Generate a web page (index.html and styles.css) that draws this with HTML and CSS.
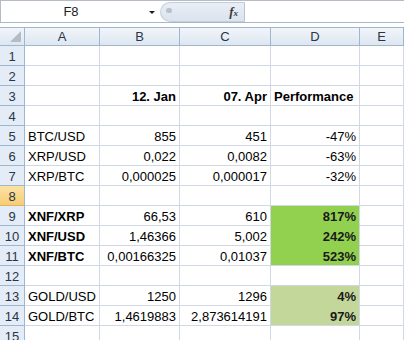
FILE: index.html
```html
<!DOCTYPE html>
<html lang="en">
<head>
    <meta charset="UTF-8">
    <title>Sheet1</title>
    <link rel="stylesheet" href="styles.css">
</head>
<body>
    <div class="formula-bar">
        <div class="name-box">
            <span class="cell-ref">F8</span>
            <span class="drop-arrow"></span>
        </div>
        <div class="fx-pill">
            <span class="grip"></span>
            <span class="fx">f<sub>x</sub></span>
        </div>
        <div class="formula-input"></div>
    </div>
    <div class="spacer"></div>

    <div class="sheet">
        <div class="corner"><span class="corner-tri"></span></div>
        <div class="col-head">A</div>
        <div class="col-head">B</div>
        <div class="col-head">C</div>
        <div class="col-head">D</div>
        <div class="col-head">E</div>

        <div class="row-head">1</div><div class="cell"></div><div class="cell"></div><div class="cell"></div><div class="cell"></div><div class="cell"></div>
        <div class="row-head">2</div><div class="cell"></div><div class="cell"></div><div class="cell"></div><div class="cell"></div><div class="cell"></div>
        <div class="row-head">3</div><div class="cell"></div><div class="cell num bold">12. Jan</div><div class="cell num bold">07. Apr</div><div class="cell bold">Performance</div><div class="cell"></div>
        <div class="row-head">4</div><div class="cell"></div><div class="cell"></div><div class="cell"></div><div class="cell"></div><div class="cell"></div>
        <div class="row-head">5</div><div class="cell">BTC/USD</div><div class="cell num">855</div><div class="cell num">451</div><div class="cell num">-47%</div><div class="cell"></div>
        <div class="row-head">6</div><div class="cell">XRP/USD</div><div class="cell num">0,022</div><div class="cell num">0,0082</div><div class="cell num">-63%</div><div class="cell"></div>
        <div class="row-head">7</div><div class="cell">XRP/BTC</div><div class="cell num">0,000025</div><div class="cell num">0,000017</div><div class="cell num">-32%</div><div class="cell"></div>
        <div class="row-head selected">8</div><div class="cell"></div><div class="cell"></div><div class="cell"></div><div class="cell"></div><div class="cell"></div>
        <div class="row-head">9</div><div class="cell bold">XNF/XRP</div><div class="cell num">66,53</div><div class="cell num">610</div><div class="cell num bold green">817%</div><div class="cell"></div>
        <div class="row-head">10</div><div class="cell bold">XNF/USD</div><div class="cell num">1,46366</div><div class="cell num">5,002</div><div class="cell num bold green">242%</div><div class="cell"></div>
        <div class="row-head">11</div><div class="cell bold">XNF/BTC</div><div class="cell num">0,00166325</div><div class="cell num">0,01037</div><div class="cell num bold green last">523%</div><div class="cell"></div>
        <div class="row-head">12</div><div class="cell"></div><div class="cell"></div><div class="cell"></div><div class="cell"></div><div class="cell"></div>
        <div class="row-head">13</div><div class="cell">GOLD/USD</div><div class="cell num">1250</div><div class="cell num">1296</div><div class="cell num bold olive">4%</div><div class="cell"></div>
        <div class="row-head">14</div><div class="cell">GOLD/BTC</div><div class="cell num">1,4619883</div><div class="cell num">2,873614191</div><div class="cell num bold olive last">97%</div><div class="cell"></div>
        <div class="row-head">15</div><div class="cell"></div><div class="cell"></div><div class="cell"></div><div class="cell"></div><div class="cell"></div>
    </div>
</body>
</html>
```

FILE: styles.css
```css
body {
    margin: 0;
    padding: 0;
    width: 404px;
    height: 340px;
    overflow: hidden;
    background-color: #ffffff;
    font-family: 'Liberation Sans', Arial, sans-serif;
    font-size: 13px;
    color: #000000;
}

.formula-bar {
    display: flex;
    height: 23px;
    box-sizing: border-box;
    border-top: 1px solid #b6bcc6;
    border-bottom: 1px solid #a9b7c9;
    background-color: #ffffff;
}

.name-box {
    width: 160px;
    display: flex;
    align-items: center;
    box-sizing: border-box;
    border-left: 1px solid #b6bcc6;
    position: relative;
}

.cell-ref {
    width: 140px;
    text-align: center;
    color: #1e1e1e;
}

.drop-arrow {
    position: absolute;
    left: 148px;
    top: 10px;
    width: 0;
    height: 0;
    border-left: 3px solid transparent;
    border-right: 3px solid transparent;
    border-top: 3px solid #1a1a1a;
}

.fx-pill {
    width: 85px;
    margin-top: 1px;
    height: 20px;
    box-sizing: border-box;
    background: linear-gradient(#e9eef6, #dbe3ef);
    border: 1px solid #c3cedd;
    border-right: 1px solid #b8c4d4;
    border-radius: 10px 0 0 10px;
    display: flex;
    align-items: center;
    justify-content: space-between;
    padding: 0 6px 0 5px;
}

.grip {
    width: 6px;
    height: 5px;
    border-radius: 3px;
    background-color: #b9c1cc;
    margin-top: -4px;
}

.fx {
    font-family: 'Liberation Serif', 'Times New Roman', serif;
    font-style: italic;
    font-weight: bold;
    font-size: 13px;
    color: #3a3a3a;
}

.fx sub {
    font-size: 9px;
    vertical-align: 0;
}

.formula-input {
    flex: 1;
}

.spacer {
    height: 4px;
    background-color: #ffffff;
}

.sheet {
    display: grid;
    grid-template-columns: 25px 75px 80px 91px 89px 44px;
    grid-template-rows: 19px repeat(15, 20px);
}

.corner,
.col-head {
    background: linear-gradient(#f2f5fa, #dde6f1);
    border-right: 1px solid #9eb6ce;
    border-bottom: 1px solid #9eb6ce;
    border-top: 1px solid #9eb6ce;
    box-sizing: border-box;
    color: #2a3546;
    text-align: center;
    line-height: 17px;
    font-family: 'Liberation Sans', Arial, sans-serif;
}

.corner {
    position: relative;
}

.corner-tri {
    position: absolute;
    right: 3px;
    bottom: 3px;
    width: 0;
    height: 0;
    border-left: 11px solid transparent;
    border-bottom: 11px solid #b4bcc6;
}

.row-head {
    background-color: #e4ecf7;
    border-right: 1px solid #9eb6ce;
    border-bottom: 1px solid #9eb6ce;
    box-sizing: border-box;
    color: #2a3546;
    text-align: center;
    line-height: 21px;
}

.row-head.selected {
    background: linear-gradient(#fbe2a4, #f6cd74);
    border-bottom-color: #e0b45a;
}

.cell {
    border-right: 1px solid #d0d7e5;
    border-bottom: 1px solid #d0d7e5;
    box-sizing: border-box;
    padding: 0 3px;
    line-height: 22px;
    white-space: nowrap;
    overflow: hidden;
}

.num {
    text-align: right;
}

.bold {
    font-weight: bold;
}

.green {
    background-color: #92d050;
    border-bottom-color: #92d050;
    color: #1a1a1a;
}

.olive {
    background-color: #c4d79b;
    border-bottom-color: #c4d79b;
    color: #1a1a1a;
}

.last {
    border-bottom-color: #d0d7e5;
}
```
